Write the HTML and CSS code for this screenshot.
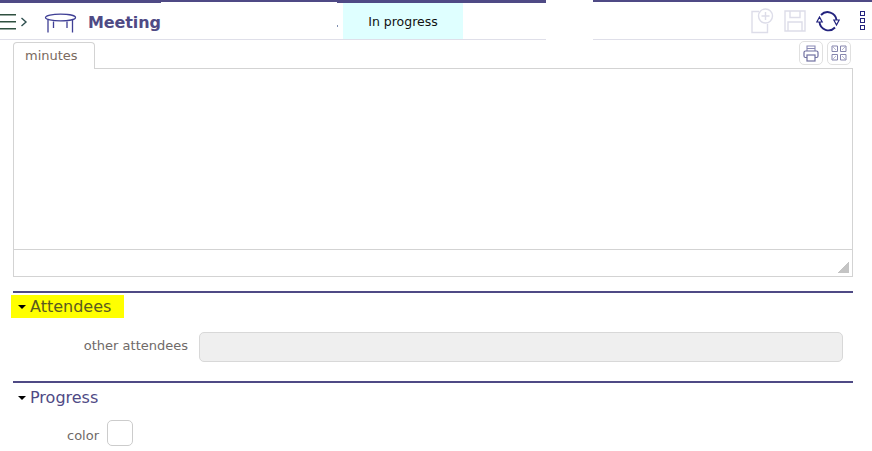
FILE: index.html
```html
<!DOCTYPE html>
<html lang="en">
<head>
  <meta charset="UTF-8" />
  <title>Meeting</title>
  <link rel="stylesheet" href="styles.css">
</head>
<body>

<header class="topbar">
  <div class="menu-btn">
    <span></span><span></span><span></span>
  </div>
  <svg class="chevron" width="8" height="12" viewBox="0 0 8 12"><path d="M1.5 2 L6 6 L1.5 10" fill="none" stroke="#2f4f4f" stroke-width="1.4"/></svg>
  <svg class="table-icon" width="33" height="20" viewBox="0 0 33 20">
    <ellipse cx="16.5" cy="4.5" rx="15" ry="3.4" fill="none" stroke="#3f3f95" stroke-width="1.3"/>
    <path d="M4 7 V19.5 M28.5 7 V19.5 M9.5 8.5 V15 M23 8.5 V15" fill="none" stroke="#3f3f95" stroke-width="1.3"/>
  </svg>
  <h1>Meeting</h1>
  <div class="status-wrap">
    <span class="dot"></span>
    <div class="status">In progress</div>
  </div>
  <div class="tools">
    <svg width="24" height="26" viewBox="0 0 24 26">
      <path d="M9 3.5 H2 V24.5 H17.5 V16" fill="none" stroke="#dddde9" stroke-width="1.4"/>
      <circle cx="15.5" cy="8" r="7" fill="#fff" stroke="#dddde9" stroke-width="1.4"/>
      <path d="M15.5 4 V12 M11.5 8 H19.5" stroke="#dddde9" stroke-width="1.4"/>
    </svg>
    <svg width="22" height="22" viewBox="0 0 22 22">
      <path d="M1 1 H21 V21 H1 Z M6 1 V7.5 H16 V1 M4 21 V12 H18 V21" fill="none" stroke="#dddde9" stroke-width="1.4"/>
    </svg>
    <svg width="24" height="24" viewBox="0 0 24 24">
      <path d="M3.5 13 A9 9 0 0 0 19 18.5 M20.5 11 A9 9 0 0 0 5 6" fill="none" stroke="#23237e" stroke-width="1.9"/>
      <path d="M0.8 13 L3.5 8 L6.2 13 Z M17.8 11 L20.5 16 L23.2 11 Z" fill="#fff" stroke="#23237e" stroke-width="1.2"/>
    </svg>
    <div class="dots"><span></span><span></span><span></span></div>
  </div>
  <div class="gap"></div>
</header>

<main class="content">
  <div class="tab-row">
    <div class="tab">minutes</div>
    <div class="tab-btns">
      <div class="small-btn">
        <svg width="16" height="17" viewBox="0 0 16 17">
          <path d="M4 6 V1 H12 V6 M4 3.5 H12" fill="none" stroke="#8a8ab5" stroke-width="1.1"/>
          <rect x="1" y="6" width="14" height="6.5" rx="1.5" fill="none" stroke="#7070a0" stroke-width="1.2"/>
          <rect x="4" y="10" width="8" height="6" fill="#fff" stroke="#7070a0" stroke-width="1.2"/>
        </svg>
      </div>
      <div class="small-btn">
        <svg width="16" height="16" viewBox="0 0 16 16">
          <path d="M1 1 H6.5 V6.5 H1 Z M9.5 1 H15 V6.5 H9.5 Z M1 9.5 H6.5 V15 H1 Z M9.5 9.5 H15 V15 H9.5 Z" fill="none" stroke="#8585ad" stroke-width="1"/>
          <path d="M2 2 L5 5 M14 2 L11 5 M2 14 L5 11 M14 14 L11 11" stroke="#a5a5c5" stroke-width="0.8"/>
        </svg>
      </div>
    </div>
  </div>
  <div class="editor">
    <div class="editor-body"></div>
    <div class="editor-foot"><span class="grip"></span></div>
  </div>

  <section class="block">
    <h2 class="block-title marked"><span class="arrow"></span>Attendees</h2>
    <div class="field">
      <label class="field-label wide">other attendees</label>
      <div class="input"></div>
    </div>
  </section>

  <section class="block block-progress">
    <h2 class="block-title"><span class="arrow"></span>Progress</h2>
    <div class="field">
      <label class="field-label">color</label>
      <div class="swatch"></div>
    </div>
  </section>
</main>

</body>
</html>
```

FILE: styles.css
```css
* {
  margin: 0;
  padding: 0;
  box-sizing: border-box;
}

body {
  background-color: #fff;
  font-family: 'DejaVu Sans', Verdana, sans-serif;
  color: #555;
  height: 451px;
  overflow: hidden;
}

.topbar {
  position: relative;
  display: flex;
  align-items: center;
  height: 40px;
  padding-top: 2px;
  border-top: 2px solid #4f4a85;
  border-bottom: 1px solid #dfdfe9;
}

/* the bar is one pixel thicker on these two stretches */
.topbar::before,
.topbar::after {
  content: "";
  position: absolute;
  top: -2px;
  height: 3px;
  background: #4f4a85;
}

.topbar::before {
  left: 0;
  width: 161px;
}

.topbar::after {
  left: 337px;
  width: 209px;
}

.menu-btn {
  display: flex;
  flex-direction: column;
  gap: 6px;
  width: 16px;
}

.menu-btn span {
  display: block;
  height: 1px;
  background: #2f5040;
  box-shadow: 0 0.5px 0 #2f5040;
}

.chevron {
  margin-left: 4px;
}

.table-icon {
  margin-left: 16px;
  margin-top: 2px;
}

h1 {
  margin: 2px 0 0 11px;
  font-size: 16px;
  font-weight: 700;
  letter-spacing: -0.1px;
  color: #4f4a85;
  width: 249px;
}

.status-wrap {
  display: flex;
  align-items: flex-end;
  align-self: stretch;
  margin-top: -1px;
}

.dot {
  width: 1px;
  height: 2px;
  margin: 0 5px 12px 0;
  background: #7f8fb0;
}

.status {
  width: 120px;
  height: 36px;
  padding-top: 11px;
  text-align: center;
  font-size: 12.5px;
  color: #111;
  background: #dfffff;
}

.tools {
  display: flex;
  align-items: center;
  margin-left: auto;
  margin-top: -2px;
  padding-right: 7px;
  gap: 10px;
}

.dots {
  display: flex;
  flex-direction: column;
  gap: 2px;
  margin-left: 10px;
}

.dots span {
  display: block;
  width: 5px;
  height: 5px;
  border: 1px solid #23237e;
}

/* white block that cuts the bars */
.gap {
  position: absolute;
  z-index: 1;
  top: -2px;
  bottom: -1px;
  left: 546px;
  width: 47px;
  background: #fff;
}

.content {
  padding: 2px 19px 0 13px;
}

.tab-row {
  display: flex;
  justify-content: space-between;
  align-items: flex-end;
  height: 26px;
}

.tab {
  width: 82px;
  height: 27px;
  margin-bottom: -1px;
  padding: 5px 0 0 11px;
  font-size: 13px;
  color: #7a6a60;
  background: #fff;
  border: 1px solid #d3d3d3;
  border-bottom: none;
  border-radius: 4px 4px 0 0;
  position: relative;
}

.tab-btns {
  display: flex;
  gap: 4px;
  align-self: flex-start;
  margin-top: -1px;
  margin-right: 2px;
}

.small-btn {
  display: flex;
  align-items: center;
  justify-content: center;
  width: 24px;
  height: 24px;
  border: 1px solid #e0e0e0;
  border-radius: 5px;
}

.editor {
  height: 209px;
  border: 1px solid #d3d3d3;
  display: flex;
  flex-direction: column;
}

.editor-body {
  flex: 1;
}

.editor-foot {
  display: flex;
  justify-content: flex-end;
  align-items: flex-end;
  height: 27px;
  padding: 0 3px 3px 0;
  border-top: 1px solid #d3d3d3;
}

.grip {
  width: 11px;
  height: 11px;
  background: linear-gradient(135deg, transparent 50%, #c4c4c4 50%);
}

.block {
  margin-top: 14px;
  border-top: 2px solid #4f4a85;
}

.block-progress {
  margin-top: 19px;
}

.block-title {
  display: flex;
  align-items: center;
  height: 23px;
  margin-top: 2px;
  font-size: 16px;
  font-weight: 400;
  color: #4f4a85;
}

.marked {
  width: 113px;
  margin-left: -2px;
  padding-left: 2px;
  color: #5a5a20;
  background: #ffff00;
}

.arrow {
  width: 0;
  height: 0;
  margin: 0 4px 0 5px;
  border-left: 4px solid transparent;
  border-right: 4px solid transparent;
  border-top: 4px solid #000;
}

.field {
  display: flex;
  align-items: center;
  margin-top: 14px;
}

.field-label {
  width: 86px;
  text-align: right;
  font-size: 13px;
  color: #6f6a68;
}

.field-label.wide {
  width: 175px;
  padding-bottom: 4px;
}

.input {
  width: 644px;
  height: 30px;
  margin-left: 11px;
  background: #efefef;
  border: 1px solid #d8d8d8;
  border-radius: 5px;
}

.swatch {
  width: 26px;
  height: 26px;
  margin-left: 8px;
  background: #fff;
  border: 1px solid #ccc;
  border-radius: 5px;
}

.block-progress .block-title {
  margin-top: 3px;
}

.block-progress .field {
  margin-top: 11px;
}

.block-progress .field-label {
  padding-top: 4px;
}
```
